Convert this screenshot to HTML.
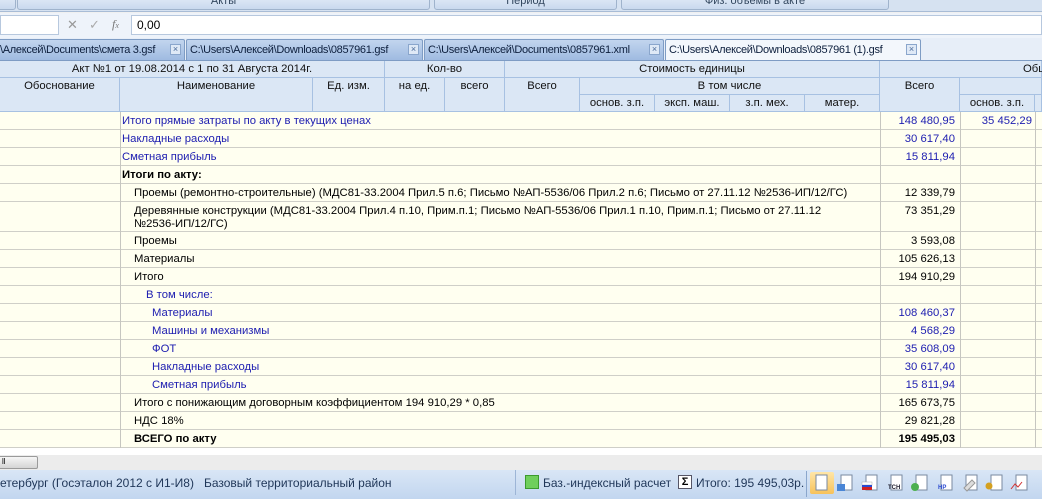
<!DOCTYPE html><html><head><meta charset="utf-8"><style>
*{margin:0;padding:0;box-sizing:border-box}
body{width:1042px;height:499px;overflow:hidden;background:#f0f0f0;font:11.3px "Liberation Sans","DejaVu Sans",sans-serif;color:#000;position:relative}
.a{position:absolute;white-space:nowrap}
.btn{position:absolute;top:-6px;height:16px;border:1px solid #9fb3cc;border-radius:3px;background:linear-gradient(#e4edf8,#c9d9ee);color:#33475f;text-align:center;font-size:11px;line-height:12px}
.tab{position:absolute;top:39px;height:22px;border:1px solid #7e9cc4;border-bottom:none;background:linear-gradient(#c2d5ee,#9db9e0);color:#0d1f3d;padding:4px 0 0 3px;font-size:11px;letter-spacing:-0.3px;border-radius:2px 2px 0 0;overflow:hidden;white-space:nowrap}
.tab .x{position:absolute;right:3px;top:4px;width:11px;height:11px;border:1px solid #8aa6cc;background:#dfe9f6;font-size:9px;line-height:9px;text-align:center;color:#4a6a99;letter-spacing:0}
.h{position:absolute;background:#dbe7f5;border-right:1px solid #a7c1e2;border-bottom:1px solid #a7c1e2;text-align:center;line-height:16px;color:#111}
.r{position:absolute;left:0;width:1042px;background:#fffff0;border-bottom:1px solid #cfcfc8}
.r .t{position:absolute;left:122px;top:3px;line-height:13px}
.r .v{position:absolute;left:880px;width:80px;text-align:right;padding-right:5px;top:3px}
.r .w{position:absolute;left:960px;width:75px;text-align:right;padding-right:3px;top:3px}
.vl{position:absolute;top:112px;height:336px;width:1px;background:#c6c6c0}
.b{color:#1d1db0}
</style></head><body>
<div class="a" style="left:0;top:0;width:1042px;height:12px;background:#d6e2f1;border-bottom:1px solid #a8bcd6"></div>
<div class="btn" style="left:-10px;width:26px"></div>
<div class="btn" style="left:17px;width:413px">Акты</div>
<div class="btn" style="left:434px;width:183px">Период</div>
<div class="btn" style="left:621px;width:268px">Физ. объемы в акте</div>
<div class="a" style="left:0;top:13px;width:1042px;height:25px;background:#eef3fa"></div>
<div class="a" style="left:0;top:15px;width:59px;height:20px;background:#fff;border:1px solid #b7c8de"></div>
<div class="a" style="left:67px;top:17px;color:#999;font-size:13px">✕</div>
<div class="a" style="left:89px;top:17px;color:#aaa;font-size:13px">✓</div>
<div class="a" style="left:112px;top:17px;color:#777;font:italic 12px 'Liberation Serif',serif">f<span style="font-size:8px">x</span></div>
<div class="a" style="left:131px;top:15px;width:911px;height:20px;background:#fff;border:1px solid #b7c8de;padding:2px 5px;font-size:12px">0,00</div>
<div class="a" style="left:0;top:38px;width:1042px;height:23px;background:#e7eef8"></div>
<div class="tab" style="left:-4px;width:189px">\Алексей\Documents\смета 3.gsf<span class="x">×</span></div>
<div class="tab" style="left:186px;width:237px">C:\Users\Алексей\Downloads\0857961.gsf<span class="x">×</span></div>
<div class="tab" style="left:424px;width:240px">C:\Users\Алексей\Documents\0857961.xml<span class="x">×</span></div>
<div class="tab" style="left:665px;width:256px;background:#f3f7fc;height:23px">C:\Users\Алексей\Downloads\0857961 (1).gsf<span class="x">×</span></div>
<div class="a" style="left:0;top:60px;width:1042px;height:1px;background:#7e9cc4"></div>
<div class="h" style="left:0;top:61px;width:385px;height:17px">Акт №1 от 19.08.2014 с 1 по 31 Августа 2014г.</div>
<div class="h" style="left:385px;top:61px;width:120px;height:17px">Кол-во</div>
<div class="h" style="left:505px;top:61px;width:375px;height:17px">Стоимость единицы</div>
<div class="h" style="left:880px;top:61px;width:162px;height:17px;text-align:left;padding-left:143px">Общ</div>
<div class="h" style="left:0;top:78px;width:120px;height:34px">Обоснование</div>
<div class="h" style="left:120px;top:78px;width:193px;height:34px">Наименование</div>
<div class="h" style="left:313px;top:78px;width:72px;height:34px">Ед. изм.</div>
<div class="h" style="left:385px;top:78px;width:60px;height:34px">на ед.</div>
<div class="h" style="left:445px;top:78px;width:60px;height:34px">всего</div>
<div class="h" style="left:505px;top:78px;width:75px;height:34px">Всего</div>
<div class="h" style="left:580px;top:78px;width:300px;height:17px">В том числе</div>
<div class="h" style="left:580px;top:95px;width:75px;height:17px">основ. з.п.</div>
<div class="h" style="left:655px;top:95px;width:75px;height:17px">эксп. маш.</div>
<div class="h" style="left:730px;top:95px;width:75px;height:17px">з.п. мех.</div>
<div class="h" style="left:805px;top:95px;width:75px;height:17px">матер.</div>
<div class="h" style="left:880px;top:78px;width:80px;height:34px">Всего</div>
<div class="h" style="left:960px;top:78px;width:82px;height:17px"></div>
<div class="h" style="left:960px;top:95px;width:75px;height:17px">основ. з.п.</div>
<div class="h" style="left:1035px;top:95px;width:7px;height:17px"></div>

<div class="r" style="top:112px;height:18px"><span class="t b">Итого прямые затраты по акту в текущих ценах</span><span class="v b">148 480,95</span><span class="w b">35 452,29</span></div>
<div class="r" style="top:130px;height:18px"><span class="t b">Накладные расходы</span><span class="v b">30 617,40</span></div>
<div class="r" style="top:148px;height:18px"><span class="t b">Сметная прибыль</span><span class="v b">15 811,94</span></div>
<div class="r" style="top:166px;height:18px"><span class="t"><b>Итоги по акту:</b></span></div>
<div class="r" style="top:184px;height:18px"><span class="t" style="left:134px">Проемы (ремонтно-строительные) (МДС81-33.2004 Прил.5 п.6; Письмо №АП-5536/06 Прил.2 п.6; Письмо от 27.11.12 №2536-ИП/12/ГС)</span><span class="v">12 339,79</span></div>
<div class="r" style="top:202px;height:30px"><span class="t" style="left:134px">Деревянные конструкции (МДС81-33.2004 Прил.4 п.10, Прим.п.1; Письмо №АП-5536/06 Прил.1 п.10, Прим.п.1; Письмо от 27.11.12<br>№2536-ИП/12/ГС)</span><span class="v">73 351,29</span></div>
<div class="r" style="top:232px;height:18px"><span class="t" style="left:134px">Проемы</span><span class="v">3 593,08</span></div>
<div class="r" style="top:250px;height:18px"><span class="t" style="left:134px">Материалы</span><span class="v">105 626,13</span></div>
<div class="r" style="top:268px;height:18px"><span class="t" style="left:134px">Итого</span><span class="v">194 910,29</span></div>
<div class="r" style="top:286px;height:18px"><span class="t b" style="left:146px">В том числе:</span></div>
<div class="r" style="top:304px;height:18px"><span class="t b" style="left:152px">Материалы</span><span class="v b">108 460,37</span></div>
<div class="r" style="top:322px;height:18px"><span class="t b" style="left:152px">Машины и механизмы</span><span class="v b">4 568,29</span></div>
<div class="r" style="top:340px;height:18px"><span class="t b" style="left:152px">ФОТ</span><span class="v b">35 608,09</span></div>
<div class="r" style="top:358px;height:18px"><span class="t b" style="left:152px">Накладные расходы</span><span class="v b">30 617,40</span></div>
<div class="r" style="top:376px;height:18px"><span class="t b" style="left:152px">Сметная прибыль</span><span class="v b">15 811,94</span></div>
<div class="r" style="top:394px;height:18px"><span class="t" style="left:134px">Итого с понижающим договорным коэффициентом 194 910,29 * 0,85</span><span class="v">165 673,75</span></div>
<div class="r" style="top:412px;height:18px"><span class="t" style="left:134px">НДС 18%</span><span class="v">29 821,28</span></div>
<div class="r" style="top:430px;height:18px"><span class="t" style="left:134px"><b>ВСЕГО по акту</b></span><span class="v"><b>195 495,03</b></span></div>
<div class="vl" style="left:120px"></div><div class="vl" style="left:880px"></div><div class="vl" style="left:960px"></div><div class="vl" style="left:1035px"></div>

<div class="a" style="left:0;top:448px;width:1042px;height:7px;background:#fff"></div>
<div class="a" style="left:0;top:455px;width:1042px;height:15px;background:#ececec"></div>
<div class="a" style="left:-2px;top:456px;width:40px;height:13px;border:1px solid #9a9a9a;border-radius:2px;background:linear-gradient(#f6f6f6,#d4d4d4);font-size:8px;padding-left:3px">ll</div>
<div class="a" style="left:0;top:470px;width:1042px;height:29px;background:linear-gradient(#d9e6f6,#c2d6ef)"></div>
<div class="a" style="left:0;top:470px;width:516px;height:25px;border-right:1px solid #9db5d6;padding:6px 0 0 0;font-size:12px;color:#1f3658">етербург (Госэталон 2012 с И1-И8)&nbsp;&nbsp; Базовый территориальный район</div>
<div class="a" style="left:525px;top:475px;width:14px;height:14px;background:#6fcf5c;border:1px solid #3b9a2e"></div>
<div class="a" style="left:543px;top:476px;font-size:12px;color:#1f3658">Баз.-индексный расчет</div>
<div class="a" style="left:678px;top:475px;width:14px;height:14px;background:#fff;border:1px solid #556;font-size:11px;line-height:12px;text-align:center;font-weight:bold">Σ</div>
<div class="a" style="left:696px;top:476px;font-size:12px;color:#1f3658">Итого: 195 495,03р.</div>
<div class="a" style="left:806px;top:471px;width:1px;height:26px;background:#8aa6cc"></div>
<div class="a" style="left:810px;top:472px;width:24px;height:22px;background:linear-gradient(#ffe6a8,#f7c25a);border-radius:2px"></div>
<svg class="a" style="left:810px;top:474px" width="232" height="18">
<g fill="#fff" stroke="#7a8aa0">
<rect x="6" y="1" width="11" height="15"/><rect x="31" y="1" width="11" height="15"/><rect x="56" y="1" width="11" height="15"/><rect x="81" y="1" width="11" height="15"/><rect x="106" y="1" width="11" height="15"/><rect x="131" y="1" width="11" height="15"/><rect x="156" y="1" width="11" height="15"/><rect x="181" y="1" width="11" height="15"/><rect x="206" y="1" width="11" height="15"/></g>
<rect x="27" y="10" width="8" height="7" fill="#4a86d6"/><rect x="52" y="8" width="10" height="3" fill="#fff" stroke="#aaa" stroke-width=".5"/><rect x="52" y="11" width="10" height="2" fill="#2a4ad0"/><rect x="52" y="13" width="10" height="3" fill="#d02020"/>
<text x="78" y="15" font-size="6" font-weight="bold" fill="#223">TCH</text>
<circle cx="105" cy="13" r="4" fill="#4caf50"/><text x="128" y="15" font-size="6" font-weight="bold" fill="#2a4ad0">HP</text>
<path d="M154 14l8-8 3 3-8 8z" fill="#ddd" stroke="#999"/><circle cx="179" cy="12" r="3.5" fill="#d4a020"/><path d="M201 15l4-5 3 3 4-5" stroke="#d03030" fill="none"/>
</svg>
</body></html>
